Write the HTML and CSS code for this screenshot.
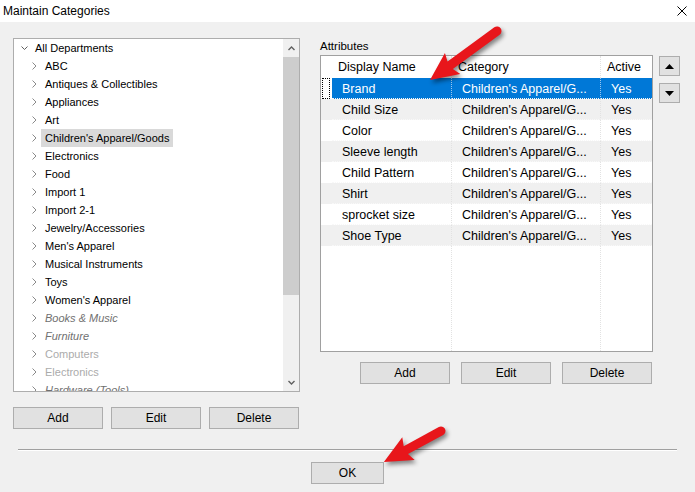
FILE: index.html
```html
<!DOCTYPE html>
<html lang="en">

<head>
    <meta charset="UTF-8">
    <meta name="viewport" content="width=device-width, initial-scale=1.0">
    <title>Maintain Categories</title>
    <link rel="stylesheet" href="styles.css">
</head>

<body>
    <div class="titlebar">
        <span class="title">Maintain Categories</span>
        <svg class="close" width="10" height="10" viewBox="0 0 10 10">
            <path d="M0.5 0.5 L9.5 9.5 M9.5 0.5 L0.5 9.5" stroke="#000" stroke-width="1" fill="none" />
        </svg>
    </div>

    <div class="content">
        <div class="left-pane">
            <div class="tree">
                <div class="tree-list">
                    <div class="node root">
                        <svg class="chev-down" width="7" height="5" viewBox="0 0 7 5"><path d="M0.5 0.5 L3.5 3.5 L6.5 0.5" stroke="#606060" fill="none" /></svg>
                        <span class="label">All Departments</span>
                    </div>
                    <div class="node"><svg class="chev" width="5" height="8" viewBox="0 0 5 8"><path d="M0.5 0.5 L4 4 L0.5 7.5" stroke="#8a8a8a" fill="none" /></svg><span class="label">ABC</span></div>
                    <div class="node"><svg class="chev" width="5" height="8" viewBox="0 0 5 8"><path d="M0.5 0.5 L4 4 L0.5 7.5" stroke="#8a8a8a" fill="none" /></svg><span class="label">Antiques &amp; Collectibles</span></div>
                    <div class="node"><svg class="chev" width="5" height="8" viewBox="0 0 5 8"><path d="M0.5 0.5 L4 4 L0.5 7.5" stroke="#8a8a8a" fill="none" /></svg><span class="label">Appliances</span></div>
                    <div class="node"><svg class="chev" width="5" height="8" viewBox="0 0 5 8"><path d="M0.5 0.5 L4 4 L0.5 7.5" stroke="#8a8a8a" fill="none" /></svg><span class="label">Art</span></div>
                    <div class="node"><svg class="chev" width="5" height="8" viewBox="0 0 5 8"><path d="M0.5 0.5 L4 4 L0.5 7.5" stroke="#8a8a8a" fill="none" /></svg><span class="label selected">Children's Apparel/Goods</span></div>
                    <div class="node"><svg class="chev" width="5" height="8" viewBox="0 0 5 8"><path d="M0.5 0.5 L4 4 L0.5 7.5" stroke="#8a8a8a" fill="none" /></svg><span class="label">Electronics</span></div>
                    <div class="node"><svg class="chev" width="5" height="8" viewBox="0 0 5 8"><path d="M0.5 0.5 L4 4 L0.5 7.5" stroke="#8a8a8a" fill="none" /></svg><span class="label">Food</span></div>
                    <div class="node"><svg class="chev" width="5" height="8" viewBox="0 0 5 8"><path d="M0.5 0.5 L4 4 L0.5 7.5" stroke="#8a8a8a" fill="none" /></svg><span class="label">Import 1</span></div>
                    <div class="node"><svg class="chev" width="5" height="8" viewBox="0 0 5 8"><path d="M0.5 0.5 L4 4 L0.5 7.5" stroke="#8a8a8a" fill="none" /></svg><span class="label">Import 2-1</span></div>
                    <div class="node"><svg class="chev" width="5" height="8" viewBox="0 0 5 8"><path d="M0.5 0.5 L4 4 L0.5 7.5" stroke="#8a8a8a" fill="none" /></svg><span class="label">Jewelry/Accessories</span></div>
                    <div class="node"><svg class="chev" width="5" height="8" viewBox="0 0 5 8"><path d="M0.5 0.5 L4 4 L0.5 7.5" stroke="#8a8a8a" fill="none" /></svg><span class="label">Men's Apparel</span></div>
                    <div class="node"><svg class="chev" width="5" height="8" viewBox="0 0 5 8"><path d="M0.5 0.5 L4 4 L0.5 7.5" stroke="#8a8a8a" fill="none" /></svg><span class="label">Musical Instruments</span></div>
                    <div class="node"><svg class="chev" width="5" height="8" viewBox="0 0 5 8"><path d="M0.5 0.5 L4 4 L0.5 7.5" stroke="#8a8a8a" fill="none" /></svg><span class="label">Toys</span></div>
                    <div class="node"><svg class="chev" width="5" height="8" viewBox="0 0 5 8"><path d="M0.5 0.5 L4 4 L0.5 7.5" stroke="#8a8a8a" fill="none" /></svg><span class="label">Women's Apparel</span></div>
                    <div class="node"><svg class="chev" width="5" height="8" viewBox="0 0 5 8"><path d="M0.5 0.5 L4 4 L0.5 7.5" stroke="#8a8a8a" fill="none" /></svg><span class="label hidden-cat">Books &amp; Music</span></div>
                    <div class="node"><svg class="chev" width="5" height="8" viewBox="0 0 5 8"><path d="M0.5 0.5 L4 4 L0.5 7.5" stroke="#8a8a8a" fill="none" /></svg><span class="label hidden-cat">Furniture</span></div>
                    <div class="node"><svg class="chev" width="5" height="8" viewBox="0 0 5 8"><path d="M0.5 0.5 L4 4 L0.5 7.5" stroke="#8a8a8a" fill="none" /></svg><span class="label inactive">Computers</span></div>
                    <div class="node"><svg class="chev" width="5" height="8" viewBox="0 0 5 8"><path d="M0.5 0.5 L4 4 L0.5 7.5" stroke="#8a8a8a" fill="none" /></svg><span class="label inactive">Electronics</span></div>
                    <div class="node"><svg class="chev" width="5" height="8" viewBox="0 0 5 8"><path d="M0.5 0.5 L4 4 L0.5 7.5" stroke="#8a8a8a" fill="none" /></svg><span class="label hidden-cat">Hardware (Tools)</span></div>
                </div>
                <div class="scrollbar">
                    <div class="sb-btn">
                        <svg width="7" height="5" viewBox="0 0 7 5"><path d="M0.5 4 L3.5 1 L6.5 4" stroke="#606060" stroke-width="1.4" fill="none" /></svg>
                    </div>
                    <div class="sb-thumb"></div>
                    <div class="sb-track"></div>
                    <div class="sb-btn">
                        <svg width="7" height="5" viewBox="0 0 7 5"><path d="M0.5 1 L3.5 4 L6.5 1" stroke="#606060" stroke-width="1.4" fill="none" /></svg>
                    </div>
                </div>
            </div>
            <div class="button-row left-buttons">
                <button class="btn">Add</button>
                <button class="btn">Edit</button>
                <button class="btn">Delete</button>
            </div>
        </div>

        <div class="right-pane">
            <div class="attr-label">Attributes</div>
            <div class="grid-row">
                <div class="grid">
                    <div class="row head">
                        <div class="rh"></div>
                        <div class="cell">Display Name</div>
                        <div class="cell">Category</div>
                        <div class="cell">Active</div>
                    </div>
                    <div class="row sel">
                        <div class="rh"><span class="focus"></span></div>
                        <div class="cell">Brand</div>
                        <div class="cell">Children's Apparel/G...</div>
                        <div class="cell">Yes</div>
                    </div>
                    <div class="row alt">
                        <div class="rh"></div>
                        <div class="cell">Child Size</div>
                        <div class="cell">Children's Apparel/G...</div>
                        <div class="cell">Yes</div>
                    </div>
                    <div class="row">
                        <div class="rh"></div>
                        <div class="cell">Color</div>
                        <div class="cell">Children's Apparel/G...</div>
                        <div class="cell">Yes</div>
                    </div>
                    <div class="row alt">
                        <div class="rh"></div>
                        <div class="cell">Sleeve length</div>
                        <div class="cell">Children's Apparel/G...</div>
                        <div class="cell">Yes</div>
                    </div>
                    <div class="row">
                        <div class="rh"></div>
                        <div class="cell">Child Pattern</div>
                        <div class="cell">Children's Apparel/G...</div>
                        <div class="cell">Yes</div>
                    </div>
                    <div class="row alt">
                        <div class="rh"></div>
                        <div class="cell">Shirt</div>
                        <div class="cell">Children's Apparel/G...</div>
                        <div class="cell">Yes</div>
                    </div>
                    <div class="row">
                        <div class="rh"></div>
                        <div class="cell">sprocket size</div>
                        <div class="cell">Children's Apparel/G...</div>
                        <div class="cell">Yes</div>
                    </div>
                    <div class="row alt">
                        <div class="rh"></div>
                        <div class="cell">Shoe Type</div>
                        <div class="cell">Children's Apparel/G...</div>
                        <div class="cell">Yes</div>
                    </div>
                    <div class="row fill">
                        <div class="rh"></div>
                        <div class="cell"></div>
                        <div class="cell"></div>
                        <div class="cell"></div>
                    </div>
                </div>
                <div class="order-buttons">
                    <button class="obtn">
                        <svg width="9" height="5" viewBox="0 0 9 5"><path d="M0 5 L4.5 0 L9 5 Z" fill="#000" /></svg>
                    </button>
                    <button class="obtn">
                        <svg width="9" height="5" viewBox="0 0 9 5"><path d="M0 0 L4.5 5 L9 0 Z" fill="#000" /></svg>
                    </button>
                </div>
            </div>
            <div class="button-row right-buttons">
                <button class="btn">Add</button>
                <button class="btn">Edit</button>
                <button class="btn">Delete</button>
            </div>
        </div>
    </div>

    <div class="separator"></div>

    <div class="footer">
        <button class="btn ok">OK</button>
    </div>

    <!-- annotation arrows drawn over the dialog -->
    <svg class="annotations" width="695" height="492" viewBox="0 0 695 492">
        <g transform="translate(497 31) rotate(143.8)">
            <path d="M0 -4.5 L58 -4.5 L55 -13 L83 0 L55 13 L58 4.5 L0 4.5 A4.5 4.5 0 0 1 0 -4.5 Z" fill="#e8161b" />
        </g>
        <g transform="translate(441 431) rotate(151.5)">
            <path d="M0 -4.5 L40 -4.5 L37 -13 L65 0 L37 13 L40 4.5 L0 4.5 A4.5 4.5 0 0 1 0 -4.5 Z" fill="#e8161b" />
        </g>
    </svg>
</body>

</html>
```
FILE: styles.css
```css
body {
    margin: 0;
    width: 695px;
    height: 492px;
    overflow: hidden;
    position: relative;
    background-color: #f0f0f0;
    font-family: "Liberation Sans", Arial, sans-serif;
    font-size: 12px;
    color: #000;
}

.titlebar {
    height: 22px;
    background-color: #fff;
    display: flex;
    align-items: center;
    justify-content: space-between;
    padding-left: 3px;
}

.title {
    font-size: 12px;
}

.close {
    margin-right: 8px;
}

.content {
    display: flex;
    padding: 16px 0 0 13px;
}

.left-pane {
    width: 287px;
}

.tree {
    box-sizing: border-box;
    height: 354px;
    border: 1px solid #adadad;
    background-color: #fff;
    display: flex;
}

.tree-list {
    flex: 1;
    overflow: hidden;
}

.node {
    height: 18px;
    display: flex;
    align-items: center;
    font-size: 11px;
    white-space: nowrap;
}

.node .chev {
    margin-left: 18px;
    flex: none;
}

.node.root .chev-down {
    margin-left: 7px;
    flex: none;
}

.label {
    margin-left: 4px;
    padding: 1px 4px 0;
    line-height: 17px;
}

.node.root .label {
    margin-left: 3px;
}

.label.selected {
    background-color: #d9d9d9;
}

.label.hidden-cat {
    font-style: italic;
    color: #707070;
}

.label.inactive {
    color: #ababab;
}

.scrollbar {
    width: 16px;
    background-color: #f0f0f0;
    display: flex;
    flex-direction: column;
}

.sb-btn {
    height: 18px;
    display: flex;
    align-items: center;
    justify-content: center;
}

.sb-thumb {
    height: 238px;
    background-color: #cdcdcd;
}

.sb-track {
    flex: 1;
}

.button-row {
    display: flex;
}

.btn {
    width: 90px;
    height: 22px;
    padding: 0;
    background-color: #e1e1e1;
    border: 1px solid #adadad;
    font-family: "Liberation Sans", Arial, sans-serif;
    font-size: 12px;
    color: #000;
}

.left-buttons {
    gap: 8px;
    margin-top: 15px;
}

.right-pane {
    margin-left: 20px;
}

.attr-label {
    height: 17px;
    line-height: 16px;
    font-size: 11.5px;
}

.grid-row {
    display: flex;
    align-items: flex-start;
}

.grid {
    box-sizing: border-box;
    width: 333px;
    height: 297px;
    border: 1px solid #a0a0a0;
    background-color: #fff;
    display: flex;
    flex-direction: column;
    font-size: 12.5px;
}

.row {
    display: grid;
    grid-template-columns: 11px 120px 149px 1fr;
    height: 21px;
    flex: none;
}

.row.head {
    height: 22px;
}

.row.fill {
    flex: 1;
    height: auto;
}

.cell {
    padding: 1px 0 0 10px;
    line-height: 20px;
    white-space: nowrap;
    overflow: hidden;
    border-right: 1px dotted #e2e2e2;
    border-bottom: 1px dotted #f8f8f8;
    box-sizing: border-box;
}

.cell:last-child {
    border-right: none;
}

.row.head .cell {
    padding: 1px 0 0 6px;
    line-height: 21px;
    border-bottom: none;
}

.row.fill .cell {
    border-bottom: none;
}

.rh {
    display: flex;
    align-items: stretch;
    padding: 0 2px 0 1px;
}

.row.alt .cell,
.row.alt .rh {
    background-color: #f0f0f0;
}

.row.sel .cell {
    background-color: #0078d7;
    color: #fff;
    border-right: 1px dotted #9cc6ee;
}

.row.sel .cell:last-child {
    border-right: none;
}

.focus {
    flex: 1;
    border: 1px dotted #000;
}

.order-buttons {
    display: flex;
    flex-direction: column;
    gap: 7px;
    margin: 1px 0 0 6px;
}

.obtn {
    width: 21px;
    height: 20px;
    padding: 0;
    background-color: #e1e1e1;
    border: 1px solid #adadad;
    display: flex;
    align-items: center;
    justify-content: center;
}

.right-buttons {
    gap: 11px;
    margin: 10px 0 0 40px;
}

.separator {
    margin: 20px 18px 0;
    border-top: 1px solid #a0a0a0;
    border-bottom: 1px solid #fff;
}

.footer {
    display: flex;
    justify-content: center;
    margin-top: 11px;
}

.btn.ok {
    width: 73px;
}

.annotations {
    position: absolute;
    top: 0;
    left: 0;
    pointer-events: none;
    filter: drop-shadow(2px 3px 2px rgba(0, 0, 0, 0.45));
}
```
